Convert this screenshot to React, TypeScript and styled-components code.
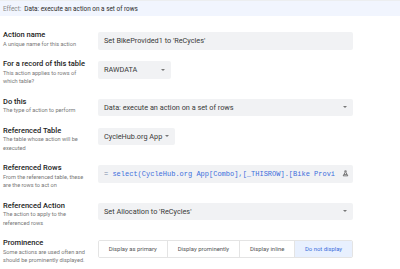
import React from 'react'
import styled, { createGlobalStyle } from 'styled-components'

const GlobalStyle = createGlobalStyle`
  body {
    margin: 0;
    background: #fff;
    font-family: Roboto, "Liberation Sans", sans-serif;
    color: #333;
  }
`

const Page = styled.div`
  width: 400px;
  height: 269px;
  overflow: hidden;
`
const EffectBar = styled.div`
  height: 16px;
  display: flex;
  align-items: center;
  gap: 3px;
  padding-left: 3px;
  background: #f1f5fe;
  border-top: 1px solid #eceef0;
  box-sizing: border-box;
  font-size: 6.4px;
`
const EffectKey = styled.span`
  color: #8a8a8a;
`
const EffectValue = styled.span`
  color: #2b2b2b;
`
const Form = styled.div`
  padding: 14px 0 0 3px;
`
const Row = styled.div<{ tall?: boolean }>`
  display: flex;
  align-items: flex-start;
  height: ${(p) => (p.tall ? '37.5px' : '29px')};
`
const LabelCol = styled.div`
  width: 95px;
  flex-shrink: 0;
`
const Title = styled.div`
  font-size: 7.5px;
  font-weight: 500;
  line-height: 9.5px;
  color: #222;
`
const Hint = styled.div`
  font-size: 5.6px;
  line-height: 8.5px;
  color: #777;
  width: 84px;
`
const Field = styled.div<{ small?: boolean }>`
  margin-top: 2px;
  ${(p) => (p.small ? 'min-width: 73px;' : 'width: 255px;')}
  height: 17.5px;
  box-sizing: border-box;
  background: #f1f2f4;
  border-radius: 2px;
  display: flex;
  align-items: center;
  padding: 0 4px 0 6px;
  font-size: 7.3px;
  color: #3a3a3a;
  overflow: hidden;
`
const FieldText = styled.span`
  flex: 1 0 auto;
  white-space: nowrap;
`
const Caret = styled.span`
  flex-shrink: 0;
  width: 0;
  height: 0;
  margin-left: 3px;
  border-left: 2.5px solid transparent;
  border-right: 2.5px solid transparent;
  border-top: 2.5px solid #777;
  margin-right: 2px;
`
const Expr = styled.span`
  flex: 1;
  white-space: nowrap;
  overflow: hidden;
  font-family: "Liberation Mono", "DejaVu Sans Mono", monospace;
  font-size: 7px;
  color: #3c6fdc;
`
const Eq = styled.span`
  color: #7a8aa8;
`
const Segments = styled.div`
  margin-top: 2px;
  width: 255px;
  height: 18px;
  box-sizing: border-box;
  display: flex;
  border: 1px solid #e4e4e4;
  border-radius: 2px;
  overflow: hidden;
`
const Segment = styled.div<{ w: number; active?: boolean }>`
  width: ${(p) => p.w}px;
  display: flex;
  align-items: center;
  justify-content: center;
  font-size: 5.9px;
  color: ${(p) => (p.active ? '#3c6fdc' : '#555')};
  background: ${(p) => (p.active ? '#e8f0fe' : '#fff')};
  & + & {
    border-left: 1px solid #e4e4e4;
  }
`

const Flask = () => (
  <svg width="7" height="7" viewBox="0 0 24 24" fill="none" stroke="#555" strokeWidth="2.6">
    <path d="M9 3h6M10 3v6L4 20h16L14 9V3" />
    <path d="M7 15h10" />
  </svg>
)

export default function App() {
  return (
    <Page>
      <GlobalStyle />
      <EffectBar>
        <EffectKey>Effect:</EffectKey>
        <EffectValue>Data: execute an action on a set of rows</EffectValue>
      </EffectBar>
      <Form>
        <Row>
          <LabelCol>
            <Title>Action name</Title>
            <Hint>A unique name for this action</Hint>
          </LabelCol>
          <Field>
            <FieldText>Set BikeProvided1 to 'ReCycles'</FieldText>
          </Field>
        </Row>
        <Row tall>
          <LabelCol>
            <Title>For a record of this table</Title>
            <Hint>This action applies to rows of which table?</Hint>
          </LabelCol>
          <Field small>
            <FieldText>RAWDATA</FieldText>
            <Caret />
          </Field>
        </Row>
        <Row>
          <LabelCol>
            <Title>Do this</Title>
            <Hint>The type of action to perform</Hint>
          </LabelCol>
          <Field>
            <FieldText>Data: execute an action on a set of rows</FieldText>
            <Caret />
          </Field>
        </Row>
        <Row tall>
          <LabelCol>
            <Title>Referenced Table</Title>
            <Hint>The table whose action will be executed</Hint>
          </LabelCol>
          <Field small>
            <FieldText>CycleHub.org App</FieldText>
            <Caret />
          </Field>
        </Row>
        <Row tall>
          <LabelCol>
            <Title>Referenced Rows</Title>
            <Hint>From the referenced table, these are the rows to act on</Hint>
          </LabelCol>
          <Field>
            <Expr>
              <Eq>=</Eq> select(CycleHub.org App[Combo],[_THISROW].[Bike Provi
            </Expr>
            <Flask />
          </Field>
        </Row>
        <Row tall>
          <LabelCol>
            <Title>Referenced Action</Title>
            <Hint>The action to apply to the referenced rows</Hint>
          </LabelCol>
          <Field>
            <FieldText>Set Allocation to 'ReCycles'</FieldText>
            <Caret />
          </Field>
        </Row>
        <Row tall>
          <LabelCol>
            <Title>Prominence</Title>
            <Hint>Some actions are used often and should be prominently displayed.</Hint>
          </LabelCol>
          <Segments>
            <Segment w={69}>Display as primary</Segment>
            <Segment w={73}>Display prominently</Segment>
            <Segment w={55}>Display inline</Segment>
            <Segment w={58} active>
              Do not display
            </Segment>
          </Segments>
        </Row>
      </Form>
    </Page>
  )
}
